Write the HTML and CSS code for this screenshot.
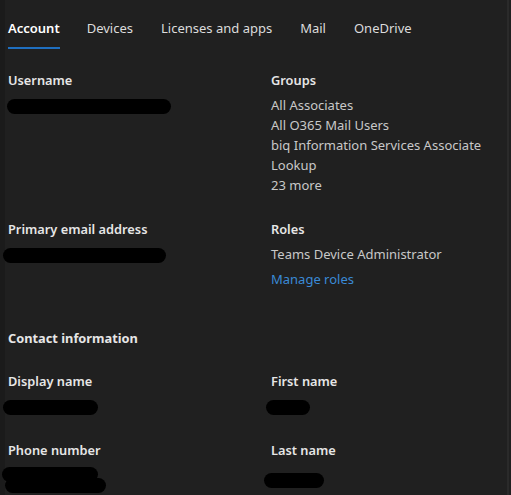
FILE: index.html
```html
<!DOCTYPE html>
<html lang="en">
<head>
    <meta charset="UTF-8">
    <meta name="viewport" content="width=device-width, initial-scale=1.0">
    <title>User details</title>
    <link rel="stylesheet" href="styles.css">
</head>
<body>
    <div class="panel">
        <nav class="tabs">
            <span class="tab active">Account</span>
            <span class="tab">Devices</span>
            <span class="tab">Licenses and apps</span>
            <span class="tab">Mail</span>
            <span class="tab">OneDrive</span>
        </nav>

        <div class="grid first">
            <div class="field">
                <div class="label">Username</div>
                <div class="value"><span class="redact r-user"></span></div>
            </div>
            <div class="field">
                <div class="label">Groups</div>
                <div class="value">All Associates</div>
                <div class="value">All O365 Mail Users</div>
                <div class="value">biq Information Services Associate</div>
                <div class="value">Lookup</div>
                <div class="value">23 more</div>
            </div>
        </div>

        <div class="grid">
            <div class="field">
                <div class="label">Primary email address</div>
                <div class="value"><span class="redact r-mail"></span></div>
            </div>
            <div class="field">
                <div class="label">Roles</div>
                <div class="value">Teams Device Administrator</div>
                <div class="value link">Manage roles</div>
            </div>
        </div>

        <h2 class="section">Contact information</h2>

        <div class="grid contact">
            <div class="field">
                <div class="label">Display name</div>
                <div class="value"><span class="redact r-display"></span></div>
            </div>
            <div class="field">
                <div class="label">First name</div>
                <div class="value"><span class="redact r-first"></span></div>
            </div>
        </div>

        <div class="grid">
            <div class="field">
                <div class="label">Phone number</div>
                <div class="value stack"><span class="redact r-phone1"></span><span class="redact r-phone2"></span></div>
            </div>
            <div class="field">
                <div class="label">Last name</div>
                <div class="value"><span class="redact r-last"></span></div>
            </div>
        </div>
    </div>
</body>
</html>
```

FILE: styles.css
```css
html, body { margin: 0; padding: 0; background: #202020; }
body { font-family: "Noto Sans", "Open Sans", Arial, sans-serif; font-size: 13px; color: #c8c8c8; }
.panel { width: 509px; height: 495px; overflow: hidden; background: #202020; box-shadow: inset 5px 0 0 #1b1b1b; padding-left: 8px; box-sizing: border-box; border-right: 2px solid #2a2a2a; }

.tabs { display: flex; padding-top: 18px; }
.tab { color: #dcdcdc; font-size: 13px; line-height: 20px; padding-bottom: 9px; margin-right: 28px; border-bottom: 2px solid transparent; }
.tab.active { color: #ffffff; font-weight: 600; border-bottom-color: #1f6fc0; margin-right: 27px; }

.grid { display: grid; grid-template-columns: 263px 1fr; margin-top: 24px; }
.grid.first { margin-top: 21px; }
.grid.contact { margin-top: 23px; }
.label { color: #e6e6e6; font-weight: 600; font-size: 12.8px; line-height: 20px; margin-bottom: 5px; }
.value { line-height: 20px; font-size: 13px; }
.link { color: #3a8ad6; margin-top: 5px; }

.section { color: #e6e6e6; font-size: 12.8px; font-weight: 700; line-height: 20px; margin: 39px 0 0; }

.redact { display: inline-block; height: 15px; background: #000; border-radius: 8px; vertical-align: middle; }
.r-user { width: 164px; margin-left: -1px; }
.r-mail { width: 163px; margin-left: -5px; }
.r-display { width: 95px; margin-left: -5px; }
.r-first { width: 44px; margin-left: -5px; }
.r-last { width: 60px; margin-left: -7px; margin-top: 8px; }
.stack { height: 20px; position: relative; }
.r-phone1 { position: absolute; left: -6px; top: 2px; width: 96px; }
.r-phone2 { position: absolute; left: -3px; top: 13px; width: 101px; }
```
